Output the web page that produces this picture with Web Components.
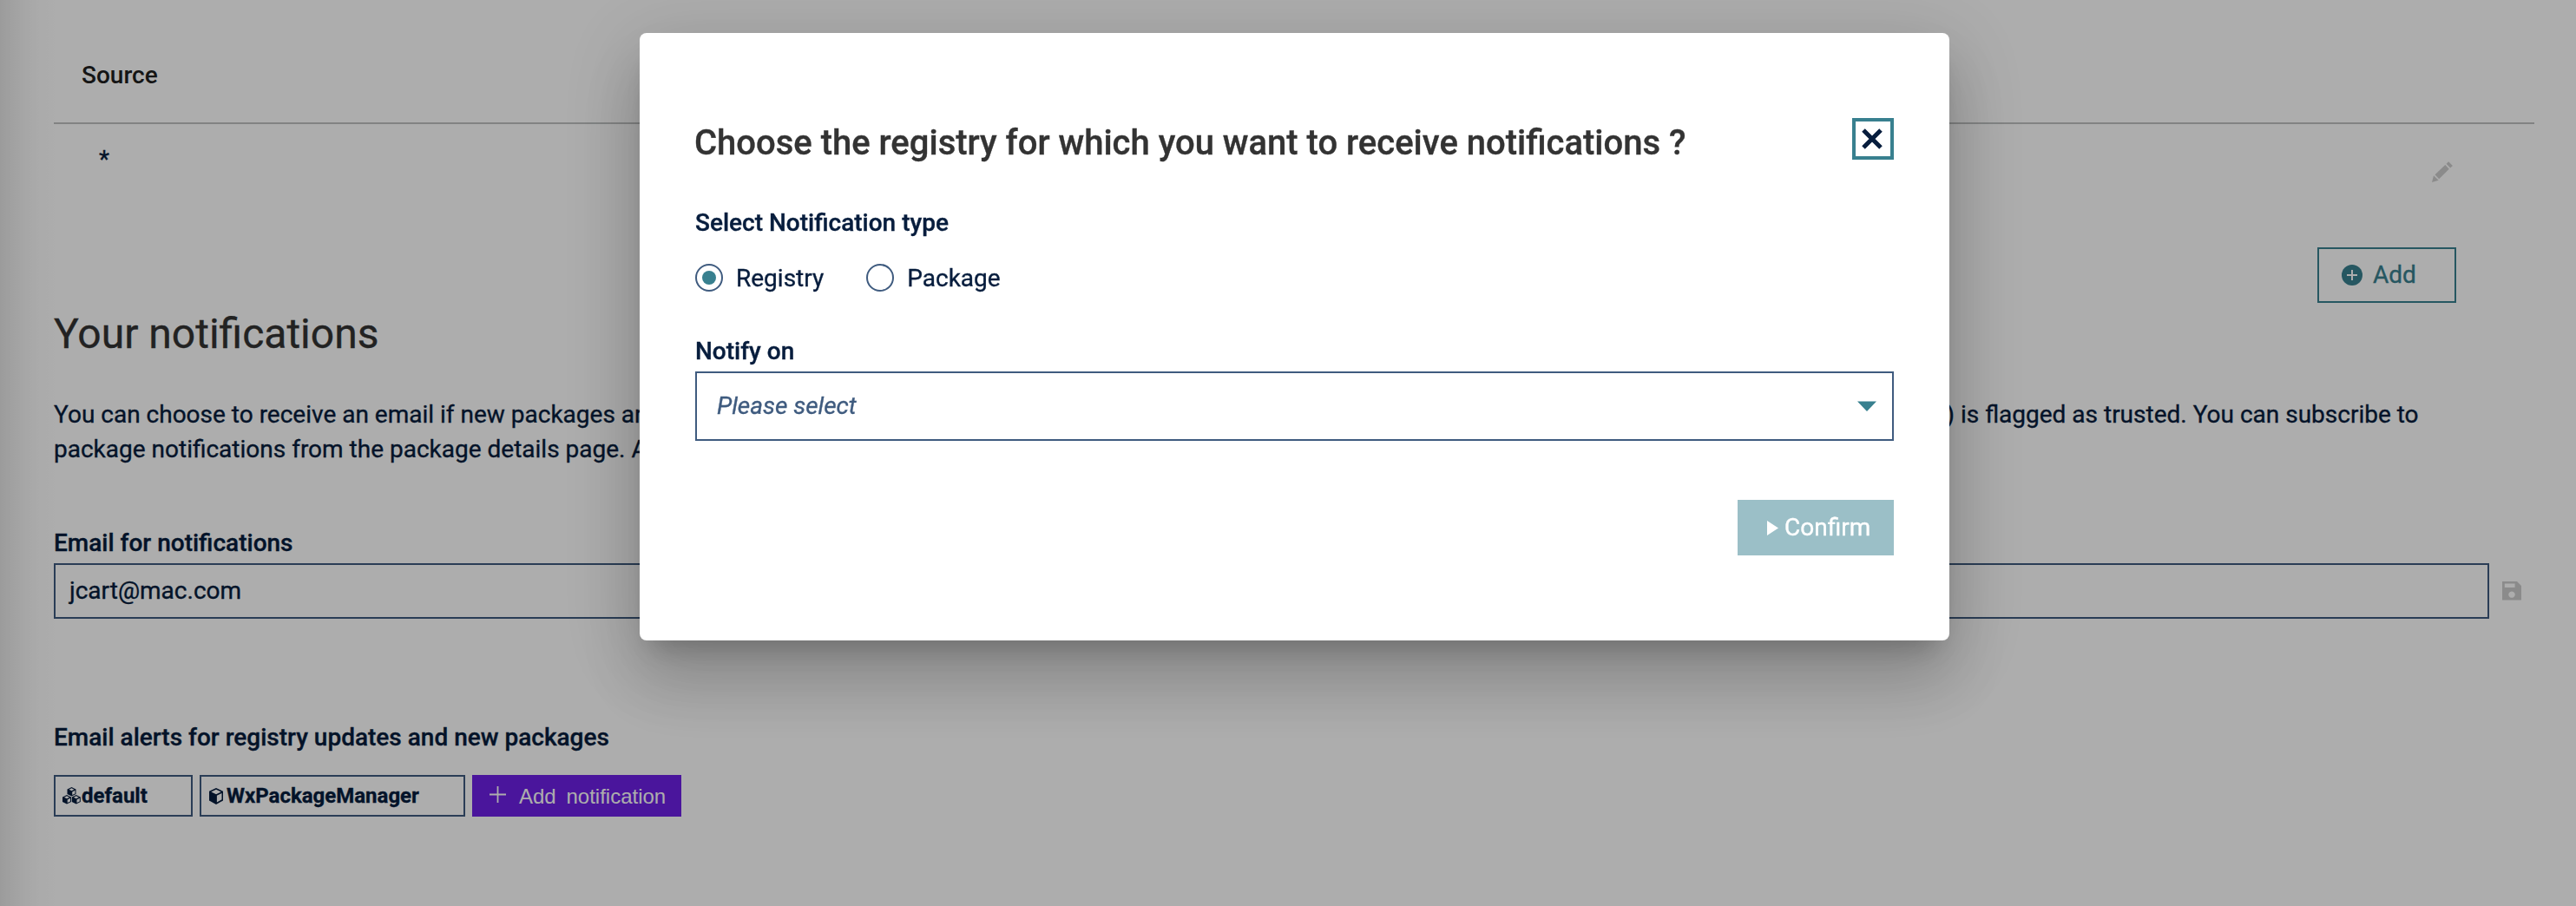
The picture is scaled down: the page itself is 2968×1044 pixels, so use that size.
<!DOCTYPE html>
<html lang="en">
<head>
<meta charset="utf-8">
<title>Notifications</title>
<style>
html,body{margin:0;height:100%;overflow:hidden}
body{background:#fff;font:400 28px/40px Roboto,"Liberation Sans",sans-serif;color:#071d3d;-webkit-text-stroke:.35px;
--teal:#38808f;--line:#3f5b7f;--muted:#cdcdcd}
</style>
</head>
<body>
<settings-page></settings-page>
<modal-overlay>
  <notification-dialog heading="Choose the registry for which you want to receive notifications ?">
    <field-label>Select Notification type</field-label>
    <radio-row>
      <radio-option checked>Registry</radio-option>
      <radio-option>Package</radio-option>
    </radio-row>
    <field-label>Notify on</field-label>
    <select-box>Please select</select-box>
    <confirm-button slot="actions">Confirm</confirm-button>
  </notification-dialog>
</modal-overlay>
<script>
const define = (name, html) => customElements.define(name, class extends HTMLElement {
  constructor() {
    super();
    const t = document.createElement('template');
    t.innerHTML = html;
    this.attachShadow({ mode: 'open' }).appendChild(t.content.cloneNode(true));
  }
  connectedCallback() {
    const h = this.shadowRoot.querySelector('[data-heading]');
    if (h) h.textContent = this.getAttribute('heading') || '';
  }
});

define('field-label', `<style>:host{display:block;font-weight:500;line-height:40px;height:40px}</style><slot></slot>`);

define('icon-pencil', `<style>:host{display:block;width:24px;height:24px}svg{display:block;fill:var(--muted)}</style>
<svg width="24" height="24" viewBox="0 0 24 24"><path d="M2 16.2 7.7 21.8 0 23.9ZM3.5 15.3 15.3 4.1 19.8 8.8 8.2 20.2ZM16.6 2.8 19.2.2 23.9 4.9 21.2 7.5Z"/></svg>`);

define('icon-save', `<style>:host{display:block;width:22px;height:22px}svg{display:block;fill:var(--muted)}</style>
<svg width="22" height="22" viewBox="0 0 22 22"><path fill-rule="evenodd" d="M0 0H17L22 5V21.5H0ZM2.8 2.4V7H14.6V2.4ZM11 11.4a3.7 3.7 0 1 0 .01 0Z"/></svg>`);

define('icon-cube', `<style>:host{display:block;width:16px;height:19px}svg{display:block;fill:currentColor}</style>
<svg width="16" height="19" viewBox="0 0 16 19"><path fill-rule="evenodd" d="M8 0 16 3.8V14.4L8 19 0 14.4V3.8ZM8 1.7 2.3 4.5 8 7.3 13.7 4.5ZM8.9 8.8V16.4L14.5 13.3V6Z"/></svg>`);

define('icon-cubes', `<style>:host{display:block;width:21px;height:20px}svg{display:block;fill:currentColor}</style>
<svg width="21" height="20" viewBox="0 0 21 20"><defs><path id="c" fill-rule="evenodd" d="M5 0 10 2.5V8.1L5 10.6 0 8.1V2.5ZM5 1.2 2 2.7 5 4.2 8 2.7ZM5.7 5.4V9.1L9 7.4V3.8Z"/></defs>
<use href="#c" x="5.5"/><use href="#c" x="0" y="9"/><use href="#c" x="10.8" y="9"/></svg>`);

define('add-button', `<style>:host{display:flex;box-sizing:border-box;width:160px;height:64px;border:2px solid var(--teal);color:var(--teal);align-items:center;padding-left:26px;gap:12px}svg{display:block}</style>
<svg width="24" height="24" viewBox="0 0 24 24"><circle cx="12" cy="12" r="12" fill="var(--teal)"/><path d="M12 6V18M6 12H18" stroke="#fff" stroke-width="2" fill="none"/></svg><slot></slot>`);

define('tag-chip', `<style>:host{display:flex;box-sizing:border-box;height:48px;border:2px solid var(--line);align-items:center;font:700 24px/28px Roboto,"Liberation Sans",sans-serif}</style><slot></slot>`);

define('add-notification', `<style>:host{display:flex;box-sizing:border-box;width:241px;height:48px;background:#6d1fe6;color:#fff;align-items:center;padding-left:20px;gap:15px;font:400 24px/28px "Liberation Sans",sans-serif;-webkit-text-stroke:0;white-space:pre;word-spacing:-.8px}svg{display:block;margin-top:-3px}.t{padding-top:1px}</style>
<svg width="19" height="19" viewBox="0 0 19 19"><path d="M9.5 0V19M0 9.5H19" stroke="#fff" stroke-width="1.8" fill="none"/></svg><span class="t"><slot></slot></span>`);

define('text-input', `<style>:host{display:flex;box-sizing:border-box;width:2806px;height:64px;border:2px solid var(--line);align-items:center;padding-left:16px}</style><slot></slot>`);

define('settings-page', `<style>
:host{display:flex;flex-direction:column;box-sizing:border-box;height:1044px;padding:0 48px 0 62px;
background:linear-gradient(90deg,rgba(0,0,0,.10),rgba(0,0,0,.065) 15px,rgba(0,0,0,.035) 30px,rgba(0,0,0,.012) 46px,transparent 66px)}
.head{box-sizing:border-box;height:143px;border-bottom:2px solid #c0c2c2;padding:67px 0 0 32px;font-weight:500;color:#202020;-webkit-text-stroke:0}
.row{display:flex;justify-content:space-between;height:142px;padding:0 94px 0 52px}
.star{padding-top:21px}
.row icon-pencil{margin-top:43px}
.right{display:flex;justify-content:flex-end;padding-right:90px}
h2{margin:8px 0 45px;font-size:48px;line-height:56px;font-weight:400;color:#333}
.line{display:flex;justify-content:space-between;width:2724.6px;white-space:nowrap}
.email{margin-top:68px}
.field{display:flex;align-items:center;gap:15px;margin-top:3px}
.alerts{margin-top:117px}
.tags{display:flex;margin-top:23px}
.a{width:160px;padding-left:8px;margin-right:8px}
.b{width:306px;padding-left:9px;gap:4px;margin-right:8px}
.a icon-cubes{margin-right:1px}
</style>
<div class="head">Source</div>
<div class="row"><span class="star">*</span><icon-pencil></icon-pencil></div>
<div class="right"><add-button>Add</add-button></div>
<h2>Your notifications</h2>
<div class="line"><span>You can choose to receive an email if new packages ar</span><span>) is flagged as trusted. You can subscribe to</span></div>
<div class="line"><span>package notifications from the package details page. A</span></div>
<field-label class="email">Email for notifications</field-label>
<div class="field"><text-input>jcart@mac.com</text-input><icon-save></icon-save></div>
<field-label class="alerts">Email alerts for registry updates and new packages</field-label>
<div class="tags"><tag-chip class="a"><icon-cubes></icon-cubes>default</tag-chip><tag-chip class="b"><icon-cube></icon-cube>WxPackageManager</tag-chip><add-notification>Add  notification</add-notification></div>`);

define('modal-overlay', `<style>:host{position:fixed;inset:0;display:flex;align-items:flex-start;padding:38px 0 0 737px;background:rgba(0,0,0,.32)}</style><slot></slot>`);

define('radio-row', `<style>:host{display:flex;gap:49px;margin:15px 0 37px;align-items:center;height:56px}</style><slot></slot>`);

define('radio-option', `<style>:host{display:flex;align-items:center;gap:15px}
i{box-sizing:border-box;width:32px;height:32px;border:2px solid var(--line);border-radius:50%;display:flex;align-items:center;justify-content:center}
span{padding-top:1px}
:host([checked]) i::after{content:"";width:16px;height:16px;border-radius:50%;background:var(--teal)}</style><i></i><span><slot></slot></span>`);

define('select-box', `<style>:host{display:flex;box-sizing:border-box;height:80px;margin-top:3px;border:2px solid var(--line);color:var(--line);font-style:italic;align-items:center;justify-content:space-between;padding:0 18px 0 23px}svg{display:block}</style>
<slot></slot><svg width="22" height="12" viewBox="0 0 22 12"><path d="M0 .5H22L11 12Z" fill="var(--teal)"/></svg>`);

define('confirm-button', `<style>:host{display:flex;box-sizing:border-box;width:180px;height:64px;background:#9bbfc7;color:#fff;align-items:center;padding-left:34px;gap:7px;font-weight:400}svg{display:block}</style>
<svg width="13" height="17" viewBox="0 0 13 17"><path d="M0 0 13 8.5 0 17Z" fill="#fff"/></svg><slot></slot>`);

define('notification-dialog', `<style>
:host{display:flex;flex-direction:column;box-sizing:border-box;width:1509px;height:700px;padding:98px 64px 0;background:#fff;border-radius:8px;
box-shadow:0 22px 30px -14px rgba(0,0,0,.2),0 48px 76px 6px rgba(0,0,0,.14),0 18px 92px 16px rgba(0,0,0,.12)}
header{display:flex;justify-content:space-between;align-items:center;height:48px;margin-bottom:53px}
h1{margin:9px 0 0 -1px;font-size:40px;line-height:48px;font-weight:500;color:#333}
button{box-sizing:border-box;width:48px;height:48px;border:4px solid var(--teal);background:#fff;padding:0 2px 0 0;display:flex;align-items:center;justify-content:center}
footer{display:flex;justify-content:flex-end;margin-top:68px}
</style>
<header><h1 data-heading></h1><button aria-label="Close"><svg width="24" height="24" viewBox="0 0 24 24"><path d="M2 2 22 22M22 2 2 22" stroke="#071d3d" stroke-width="5" fill="none"/></svg></button></header>
<slot></slot>
<footer><slot name="actions"></slot></footer>`);
</script>
</body>
</html>
